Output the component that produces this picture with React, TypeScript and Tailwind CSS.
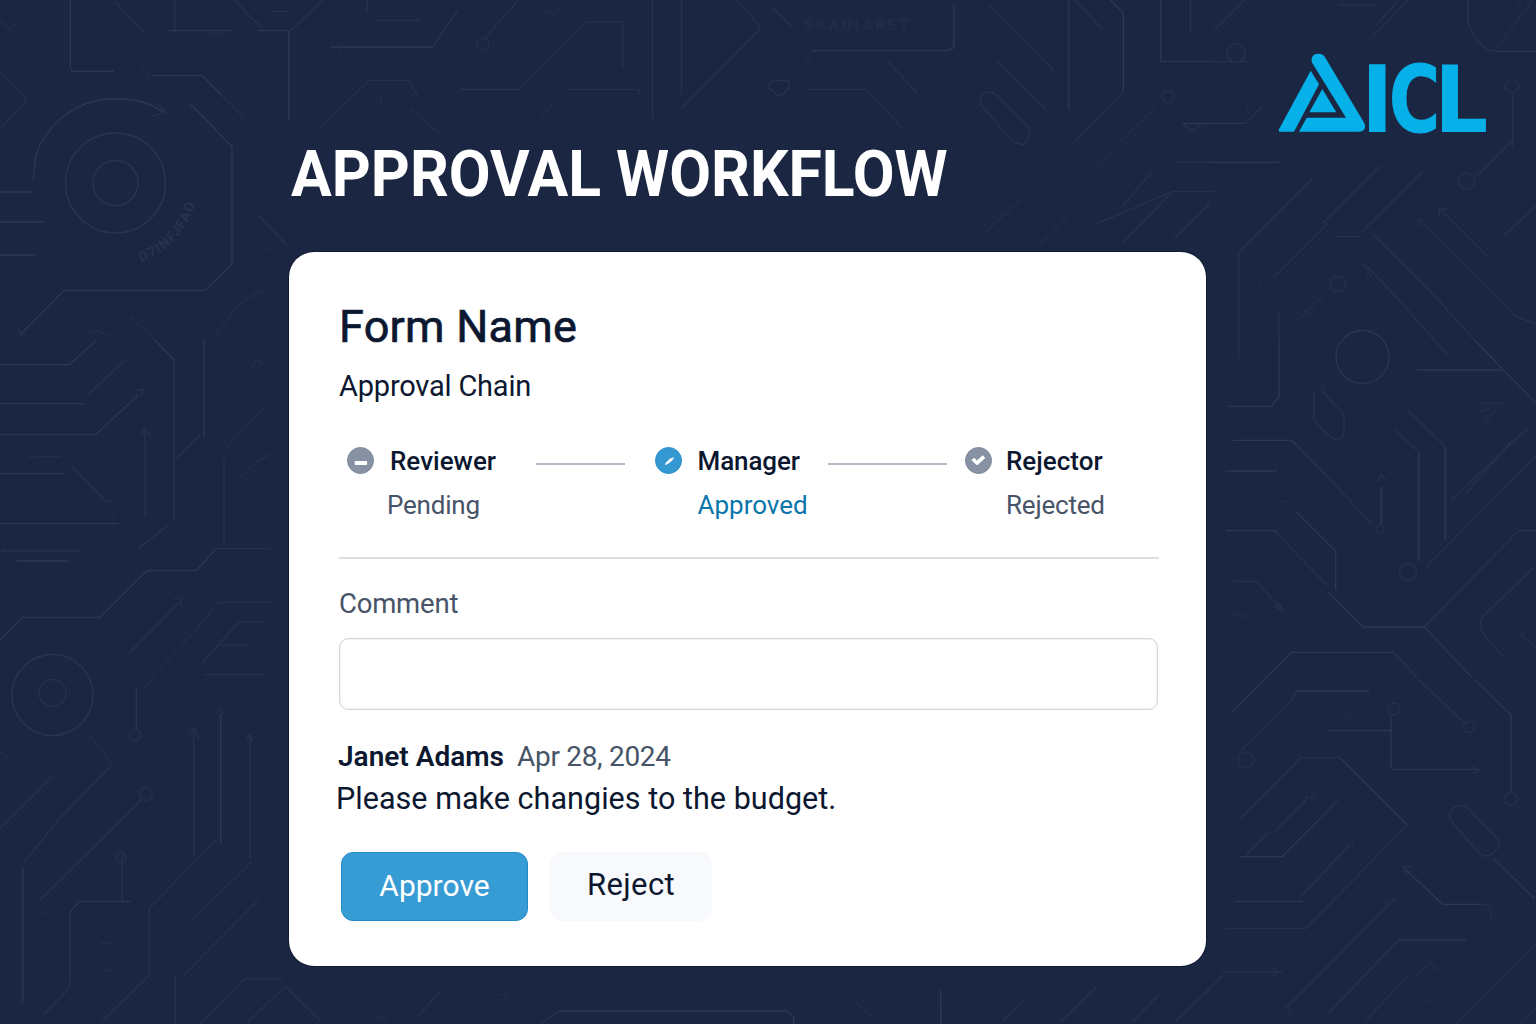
import React from "react";

type Region = { at: string; bright?: string; mid?: string; dim?: string };

// Circuit-board line work, grouped by the region of the backdrop it decorates.
const regions: Region[] = [
  {
    at: "translate(0 0) scale(0.33333)",
    bright:
      "M211 0V205L217 214H342 M455 227H607L665 285 M505 92H695 M775 92H866V360 M580 320L696 440V792L615 871H192L60 1005 M0 576H100 M0 666H135 M0 765H108 M100 540C102 500 108 460 118 437C140 400 165 368 192 348C240 312 290 298 330 297H370C420 298 460 315 492 337",
    mid:
      "M345 5L435 100 M525 0V90 M705 0C730 30 760 65 788 82 M665 285L730 350 M0 213L70 285L80 300L0 388 M455 350L497 337L470 308 M575 305V325 M565 318H585 M775 645L862 738 M60 1005L55 985M60 1005L80 1003 M815 34H870",
    dim: "M645 1005L720 910L785 870 M390 948L462 1018 M265 1000L290 990L325 1005 M620 97L650 103L670 97 M0 60L30 90L45 72 M795 738L815 755 M425 200L450 235",
  },
  {
    at: "translate(0 340) scale(0.33333)",
    bright:
      "M0 74H208L290 0 M0 191H250 M0 284H287L415 165 M0 401H195 M0 551H355 M522 540V60L465 0 M612 0V290 M0 900L67 832H300L440 692H588L648 626 M50 663H205",
    mid:
      "M265 165L372 62 M435 530V265 M422 285L435 265L452 288 M530 355L600 285 M672 350V615 M648 626H810 M0 633H243 M215 378L317 483H335 M410 150H438M425 140V165 M415 625L505 555 M655 787H812 M385 942L540 785 M520 775H543V800 M605 970L718 845H790 M610 1004H795",
    dim: "M80 360L95 350H183 M112 340V362 M680 322L785 210 M720 415L770 365L815 342 M455 1012L580 880L655 787 M660 916H745 M757 85C755 65 775 60 790 65L770 85 M12 620V630 M340 525V545",
  },
  {
    at: "translate(0 680) scale(0.33333)",
    bright: "M409 25V150 M68 560V970 M662 100V490 M210 880V697L238 664H392",
    mid:
      "M581 150V530 M565 158L581 143L598 180 M650 98L662 85L672 105 M750 165V535 M738 180L748 162L760 185 M367 515V660 M0 445L155 290 M335 255L175 420L70 550 M120 660L425 358 M648 480L448 685V885L303 1028 M755 545L575 722 M550 887L775 660 M526 1030V890 M600 1032L733 897H850 M740 1030L860 915 M210 880V922L130 1005",
    dim: "M260 155L335 250 M300 788H340 M305 870H350 M0 215L38 245 M55 970H70 M120 705L135 695 M430 25L455 0",
  },
  {
    at: "translate(1206 0) scale(0.33333)",
    bright: "M0 487H220 M0 370H120 M873 154H990 M786 0V70",
    mid:
      "M25 90L115 0 M400 15H510 M500 110L605 0 M515 70L575 5 M786 70C800 110 825 140 850 152H873 M0 185H125 M919 285V440 M919 420L810 530 M652 512L465 698 M463 710H390 M99 1020V757L318 537 M522 498L350 670 M365 670L200 835 M500 700L665 865L805 1020 M705 630L845 770 M700 650V627H725 M645 665L930 950L990 972 M890 710L990 618 M485 800L570 890L685 1020 M470 793L492 810 M219 938V1020 M120 370L170 318",
    dim: "M870 145L980 0 M125 320V340 M630 660H655M640 680V655 M485 830V812L497 835 M360 880L265 970 M293 925L305 945L325 935 M160 845L168 862 M0 575H30 M0 612L15 600 M350 515L365 508 M930 0L945 20",
  },
  {
    at: "translate(1206 340) scale(0.33333)",
    bright:
      "M219 0V170L197 199H67 M633 90H885 M805 0L990 190 M80 301H257L365 410 M60 393H210 M638 335V665 M718 320V600 M389 750V633L268 512 M368 757L472 861H655L800 1015 M175 1018L257 937H562 M60 572H215 M937 572H990 M526 440V555",
    mid:
      "M99 0V55 M365 410L495 550 M638 335L568 270 M718 320L605 210 M990 348L660 682 M655 861L937 572 M205 572L365 737 M80 724H150L230 812 M205 800L230 812L220 790 M323 150V238C350 270 375 300 395 300C408 300 412 290 414 280V225L345 150 M562 937L635 1015 M980 685L830 830C815 860 820 880 895 952 M735 480L965 265 M780 460L920 300 M685 0L725 42 M512 425L526 405L542 425",
    dim: "M810 185L835 190H895L830 245 M820 215L855 205 M850 240L852 262 M80 820L115 828L90 845 M228 485H255 M45 393H60 M210 375V405 M940 880L990 925 M940 885L960 875 M345 135L360 150 M570 940L610 985",
  },
  {
    at: "translate(1206 680) scale(0.33333)",
    bright:
      "M80 95L175 0 M270 33H490 M365 152H553 M555 105V262L562 268H810 M402 233L604 435 M808 0L915 105V335 M100 530H228L340 418 M85 664H290 M710 673L595 565 M710 673H830 M578 780H780 M862 535L985 655",
    mid:
      "M270 33L262 55L105 210 M105 415L285 233H402 M340 418L400 355 M604 435L300 745H60 M285 650L430 495 M590 560H620M593 560L603 585 M733 420L820 520C835 532 850 530 862 520L880 495V482L780 378H760C735 380 728 400 733 420Z M640 0L780 135 M800 260L820 270L800 283 M568 655L240 985 M578 780L368 998 M605 890L480 1020 M50 876H230 M200 860L215 876L198 892 M0 940L50 885 M750 1030L990 790 M120 525L185 458 M205 455L310 350",
    dim: "M290 352H330M318 340V365 M830 673C860 675 858 700 852 735 M632 885L672 848L700 875 M815 500L860 520 M640 970L670 960 M690 965L700 980 M425 495H440V485 M525 665H550 M415 95L430 115 M240 1005L260 985 M940 1030L990 985",
  },
  {
    at: "translate(280 0) scale(0.5931 0.33333)",
    bright: "M85 141H257 M895 152H1125C1133 150 1136 145 1136 135V15 M305 268H404 M1422 275V38L1400 0 M1330 0V330 M1485 0V184H1568 M1522 371H1568",
    mid:
      "M404 268L517 66H578V205 M18 92L72 0 M147 0V38 M160 61H238 M257 141L300 30 M345 115L402 0 M628 0V358 M677 0V285 M770 0L808 75V90L677 325 M830 25L865 82 M68 385L150 241H217L232 290 M485 268H605V285 M888 268H987L1050 385 M1025 185L1075 280 M1195 15L1305 213 M1340 0L1388 90 M1422 275L1340 425 M1210 185L1292 330 M1180 310L1235 425L1255 435C1262 420 1265 400 1262 380L1208 285C1195 268 1182 275 1180 310Z M825 265C825 235 835 240 843 242L858 240C860 262 855 280 840 288L825 265Z M1535 0V95 M1568 575H1505L1378 670 M1522 371L1538 392L1552 375 M1568 610L1508 715 M1470 515L1420 620 M1502 580L1420 730 M1512 487H1568",
    dim: "M220 325L268 400 M440 355L465 300 M1188 700L1248 600 M1280 735L1328 650 M1380 495L1400 460 M1410 435L1475 325 M100 130V155 M155 310L170 292L172 312 M0 710L12 735 M447 28L460 42L470 25 M885 190L895 165",
  },
  {
    at: "translate(280 920) scale(0.5931 0.33333)",
    bright: "M470 273H855L866 290V312 M1114 210V312",
    mid: "M10 200L70 305 M470 273L440 310 M232 290L270 215 M1218 305L1255 238 M1315 308L1375 205 M1437 305L1483 222 M1510 305L1568 205",
    dim: "M368 225H385L372 250 M970 245L1000 295 M165 300L172 285L178 305 M1370 200L1385 210",
  },
];

const rings: [number, number, number][] = [
  [115.5, 183, 50],
  [115.5, 183, 22.5],
  [52.5, 695, 40.5],
  [52.5, 693, 13.5],
  [135, 735, 5.5],
  [146, 794, 6.5],
  [121, 857, 5],
  [1362.5, 357, 26.5],
  [1338, 284, 8],
  [1466.5, 181, 8],
  [1512, 86, 6.5],
  [1236, 53, 9],
  [1408, 572, 8.5],
  [1380, 529, 4],
  [1394, 709, 6],
  [1469, 727, 5.5],
  [1511, 799, 6.5],
  [1246, 760, 8],
  [483, 44, 6],
  [1168, 97, 6],
];

function Backdrop() {
  return (
    <svg className="absolute inset-0" width="1536" height="1024" viewBox="0 0 1536 1024" fill="none" aria-hidden="true">
      {regions.map((r) => (
        <g key={r.at} transform={r.at} strokeLinejoin="round">
          <path d={r.bright} stroke="#2a3853" strokeWidth="1.4" vectorEffect="non-scaling-stroke" />
          <path d={r.mid} stroke="#24324d" strokeWidth="1.4" vectorEffect="non-scaling-stroke" />
          <path d={r.dim} stroke="#212e49" strokeWidth="1.5" vectorEffect="non-scaling-stroke" />
        </g>
      ))}
      {rings.map(([x, y, r]) => (
        <circle key={`${x}-${y}-${r}`} cx={x} cy={y} r={r} stroke={r > 22 ? "#283651" : "#24314d"} strokeWidth="1.4" />
      ))}
      <path id="dial" d="M141 262A84 84 0 0 0 197 190" />
      <text fill="#25334d" className="font-['Roboto'] text-[14px] font-bold" letterSpacing="1.5">
        <textPath href="#dial">D7INFJFAO</textPath>
      </text>
      <text x="804" y="30" fill="#202d48" className="font-['Roboto'] text-[15px] font-bold" letterSpacing="3">
        SKAUIARET
      </text>
    </svg>
  );
}

function Logo() {
  return (
    <svg className="mt-[50px] mr-[46px] ml-auto block" width="212" height="88" viewBox="1278 50 212 88" fill="#06b1ea" role="img" aria-label="AICL">
      <path d="M1310.7 70.7L1319 84.3L1294 131.7H1279V129.3Z" />
      <path d="M1322.3 89L1336.3 112.3H1309.3Z" />
      <path d="M1312.6 63.5C1309.8 58.5 1313 53.8 1318 53.8C1321.3 53.8 1323.6 54.8 1325.3 57.7L1363.8 122.3C1366.8 127.5 1364.5 131.7 1359 131.7H1299L1306.7 117.7H1346Z" />
      <g className="font-['DejaVu_Sans'] text-[93px] font-bold">
        <text transform="translate(1361 131.7) scale(0.94 1)">I</text>
        <text transform="translate(1389 131.7) scale(0.75 1)" stroke="#06b1ea" strokeWidth="1">C</text>
        <text transform="translate(1434.2 131.7) scale(0.91 1)">L</text>
      </g>
    </svg>
  );
}

function StatusIcon({ kind }: { kind: "pending" | "approved" | "rejected" }) {
  const blue = kind === "approved";
  return (
    <svg width="27" height="27" viewBox="0 0 27 27" fill="none" className="mt-0.5 shrink-0">
      <circle cx="13.5" cy="13.5" r="13" fill={blue ? "#3498d2" : "#8793a4"} stroke={blue ? "#2a8cc8" : "#7c8899"} />
      {kind === "pending" && <rect x="7.7" y="14" width="12.4" height="4" rx="0.8" fill="#fff" />}
      {blue && <path d="M10 17.2C11.5 14.2 15 11.2 18.9 10.3C18.6 13 14.2 16.3 11.2 17.8C10.4 18.1 9.8 17.8 10 17.2Z" fill="#fff" />}
      {kind === "rejected" && (
        <path d="M7.8 12L12 16L19 9.7" stroke="#fff" strokeWidth="3.7" strokeLinejoin="round" />
      )}
    </svg>
  );
}

export default function App() {
  return (
    <div className="relative h-[1024px] w-[1536px] overflow-hidden bg-[#1b2742] font-['Roboto',sans-serif] text-[#0c1730]">
      <Backdrop />
      <div className="relative flex h-full flex-col">
        <header className="h-[143px]">
          <div className="flex">
            <Logo />
          </div>
        </header>
        <h1 className="ml-[291px] h-[109px] w-[700px] origin-left scale-x-[0.948] text-[64px] leading-[64px] font-bold whitespace-nowrap text-white">
          APPROVAL WORKFLOW
        </h1>

        <section className="ml-[289px] h-[713.5px] w-[917px] rounded-[25px] bg-white pt-[51px] pl-[50px] shadow-[0_0_0_1px_#101a33]">
          <h2 className="text-[45px] leading-[48px] font-normal tracking-[0.25px] [-webkit-text-stroke:0.7px_#0c1730]">Form Name</h2>
          <p className="mt-[19px] text-[29px] leading-8 tracking-[-0.2px]">Approval Chain</p>

          <div className="mt-[43px] flex h-[76px] items-start text-[26px] leading-8">
            <div className="ml-2 flex w-[189px] gap-4">
              <StatusIcon kind="pending" />
              <div>
                <div className="font-medium">Reviewer</div>
                <div className="mt-3 -ml-[3px] tracking-[-0.2px] text-[#475468]">Pending</div>
              </div>
            </div>
            <div className="mt-[17.5px] h-0.5 w-[89px] bg-[#b4b9c6]" />
            <div className="ml-[29.5px] flex w-[173.5px] gap-4">
              <StatusIcon kind="approved" />
              <div>
                <div className="font-medium tracking-[-0.1px]">Manager</div>
                <div className="mt-3 text-[#0a76ab]">Approved</div>
              </div>
            </div>
            <div className="mt-[17.5px] h-0.5 w-[119px] bg-[#b4b9c6]" />
            <div className="ml-[17.5px] flex gap-[14.5px]">
              <StatusIcon kind="rejected" />
              <div>
                <div className="font-medium">Rejector</div>
                <div className="mt-3 tracking-[-0.2px] text-[#475468]">Rejected</div>
              </div>
            </div>
          </div>

          <hr className="mt-9 h-0.5 w-[820px] border-0 bg-[#dcdee1]" />

          <label className="mt-[29px] block text-[27.5px] leading-8 tracking-[-0.2px] text-[#475468]" htmlFor="comment">
            Comment
          </label>
          <input
            id="comment"
            className="mt-[18px] block h-[72px] w-[819px] rounded-[9px] border border-[#d5d8dc] bg-white px-4 text-[26px] shadow-[inset_0_0_0_0.5px_#e4e6e9] outline-none"
          />

          <div className="mt-[31px] -ml-px flex text-[28px] leading-8">
            <span className="w-[179px] font-semibold">Janet Adams</span>
            <span className="tracking-[-0.3px] text-[#475468]">Apr 28, 2024</span>
          </div>
          <p className="mt-[10px] -ml-[3px] text-[30.5px] leading-8 tracking-[0.04px]">Please make changies to the budget.</p>

          <div className="mt-[37px] ml-0.5 flex gap-[22px]">
            <button className="h-[69px] w-[187px] rounded-xl border border-[#2489c8] bg-[#389cd4] pb-0.5 text-[30px] text-white">
              Approve
            </button>
            <button className="h-[69px] w-[162px] rounded-xl bg-[#f8f9fc] pb-[3px] text-[31px] tracking-[0.4px]">Reject</button>
          </div>
        </section>
      </div>
    </div>
  );
}
